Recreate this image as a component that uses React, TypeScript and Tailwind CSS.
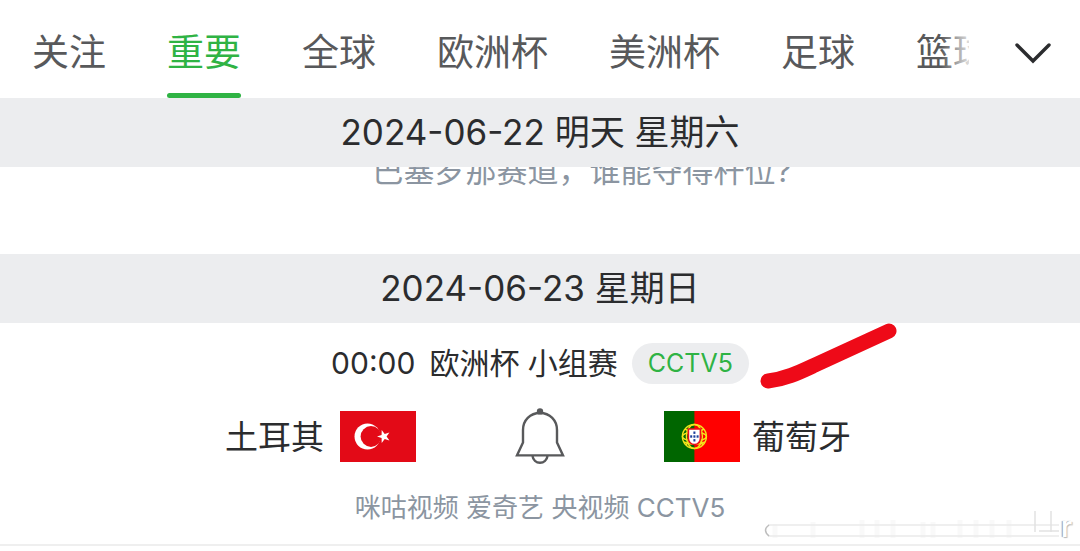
import React, { useState } from 'react';

const TABS = ['关注', '重要', '全球', '欧洲杯', '美洲杯', '足球', '篮球'];

const DateBar: React.FC<{ children: React.ReactNode }> = ({ children }) => (
  <h2 className="bg-[#ecedef] text-center text-[35px] leading-[69px] font-[390] text-[#2b2c2e]">{children}</h2>
);

const TurkeyFlag: React.FC = () => (
  <svg className="h-[51px] w-[76px] shrink-0" viewBox="0 0 76 51" role="img" aria-label="土耳其">
    <rect width="76" height="51" fill="#e30a17" />
    <circle cx="27.5" cy="25.5" r="13" fill="#fff" />
    <circle cx="31" cy="25.5" r="10.4" fill="#e30a17" />
    <path d="M37 25.500l4.600-1.600.1-4.900 3 3.900 4.700-1.400-2.800 4 2.800 4-4.700-1.400-3 3.900-.1-4.900z" fill="#fff" />
  </svg>
);

const PortugalFlag: React.FC = () => (
  <svg className="h-[51px] w-[76px] shrink-0" viewBox="0 0 76 51" role="img" aria-label="葡萄牙">
    <rect width="76" height="51" fill="#f00" />
    <rect width="30.4" height="51" fill="#060" />
    <g fill="none" stroke="#f4e51c" strokeWidth="1.4">
      <circle cx="30.4" cy="25.5" r="12" />
      <ellipse cx="30.4" cy="25.5" rx="12" ry="4.5" />
      <ellipse cx="30.4" cy="25.5" rx="8" ry="12" />
      <path d="M21 18c6 3 13 9 18 16M40 18c-6 3-13 9-18 16M20 31c6 3 15 3 21 0" />
    </g>
    <path d="M24.400 18h12v9.500a6 6 0 0 1-12 0z" fill="#fff" stroke="#e8101c" strokeWidth="1.6" />
    <g fill="#1c3f9c">
      <rect x="29.4" y="20.5" width="2" height="2.4" />
      <rect x="29.4" y="24.3" width="2" height="2.4" />
      <rect x="29.4" y="28.1" width="2" height="2.4" />
      <rect x="26.2" y="24.3" width="2" height="2.4" />
      <rect x="32.6" y="24.3" width="2" height="2.4" />
    </g>
  </svg>
);

const BellIcon: React.FC = () => (
  <svg className="h-[56px] w-[50px]" viewBox="0 0 50 56" fill="none" stroke="#58595b" strokeWidth="2.4" aria-hidden="true">
    <circle cx="25" cy="3.4" r="3.2" fill="#58595b" stroke="none" />
    <path d="M25 5C15 5 8 12.500 8 22v12.500L2 47.400h46L42 34.500V22C42 12.500 35 5 25 5z" />
    <path d="M17.500 48c.6 4 3.600 6.800 7.500 6.800s6.900-2.800 7.500-6.800" />
  </svg>
);

// Faint embossed signature in the corner of the feed
const Signature: React.FC = () => (
  <div className="pointer-events-none absolute right-2 bottom-0 flex items-end" aria-hidden="true">
    <svg className="h-[34px] w-[298px]" viewBox="0 0 298 34" fill="none">
      <g stroke="#f9f9f9" strokeWidth="5">
        <path d="M12 14v14M50 12v16M99 10v18M114 10v18M130 10v18M160 12v16M170 12v16M197 10v18M213 10v18M229 10v18M246 10v18" />
      </g>
      <path d="M296 15H5M5 26h291" stroke="#eaeaea" strokeWidth="1.4" />
      <path d="M6 15q-7 5 0 11" stroke="#bdbdbd" strokeWidth="1.5" />
      <path d="M272 1v21M288 1v21M276 21h20" stroke="#e2e2e2" strokeWidth="1.5" />
    </svg>
    <span className="text-[28px] leading-[34px] font-semibold text-white [text-shadow:-1px_0_1px_#999,1px_1px_1px_#bbb]">r</span>
  </div>
);

const App: React.FC = () => {
  const [active, setActive] = useState('重要');

  return (
    <div className="min-h-screen bg-white font-['Inter','Noto_Sans_CJK_SC',sans-serif] font-[390] text-[#2b2c2e]">
      <header className="flex bg-white">
        <nav className="relative flex min-w-0 flex-1 gap-[61px] overflow-hidden pl-8">
          {TABS.map((tab) => (
            <button
              key={tab}
              type="button"
              onClick={() => setActive(tab)}
              className={`flex shrink-0 flex-col pt-3 text-[37px] ${tab === active ? 'text-[#2fb344]' : 'text-[#58595b]'}`}
            >
              <span className="leading-[81px]">{tab}</span>
              <span className={`h-[5px] w-full rounded-full ${tab === active ? 'bg-[#2fb344]' : 'bg-transparent'}`} />
            </button>
          ))}
          <div className="pointer-events-none absolute inset-y-0 right-0 w-7 bg-linear-to-r from-white/0 to-white/80" />
        </nav>
        <button type="button" aria-label="展开" className="flex w-[111px] items-center justify-center pt-2 pl-4">
          <svg className="h-[22px] w-[36px]" viewBox="0 0 36 22" fill="none" stroke="#2b2c2e" strokeWidth="3.4" strokeLinecap="round">
            <path d="M2 3l16 16L34 3" />
          </svg>
        </button>
      </header>

      <main>
        <DateBar>2024-06-22 明天 星期六</DateBar>
        <div className="overflow-hidden pb-[65px]">
          <p className="-mt-[14px] pl-[84px] text-center text-[31px] leading-9 text-[#8b95a1]">
            巴塞罗那赛道，谁能夺得杆位?
          </p>
        </div>

        <DateBar>2024-06-23 星期日</DateBar>
        <section className="relative border-b-2 border-[#efefef] pt-5 pb-[18px]">
          <div className="flex items-center justify-center gap-[14px] text-[30px] leading-[41px]">
            <time>00:00</time>
            <span>欧洲杯 小组赛</span>
            <span className="rounded-full bg-[#ecedef] px-4 text-[25px] text-[#2fb344]">CCTV5</span>
          </div>

          <div className="mt-6 flex items-center">
            <div className="flex flex-1 items-center justify-end gap-4 text-[33px]">
              <span className="pt-1">土耳其</span>
              <TurkeyFlag />
            </div>
            <button type="button" aria-label="提醒" className="flex w-[248px] justify-center">
              <BellIcon />
            </button>
            <div className="flex flex-1 items-center gap-3 text-[33px]">
              <PortugalFlag />
              <span className="pt-1">葡萄牙</span>
            </div>
          </div>

          <p className="mt-[26px] text-center text-[26px] leading-9 text-[#8b95a1]">
            咪咕视频 爱奇艺 央视频 CCTV5
          </p>

          {/* Hand-drawn marker over the match */}
          <svg className="pointer-events-none absolute top-0 left-1/2 ml-[220px] h-[68px] w-[138px]" viewBox="0 0 138 68" fill="none" aria-hidden="true">
            <path d="M8 58C26 56 40 49 55 42L129 8" stroke="#ee0a18" strokeWidth="15" strokeLinecap="round" />
          </svg>
          <Signature />
        </section>
      </main>
    </div>
  );
};

export default App;
